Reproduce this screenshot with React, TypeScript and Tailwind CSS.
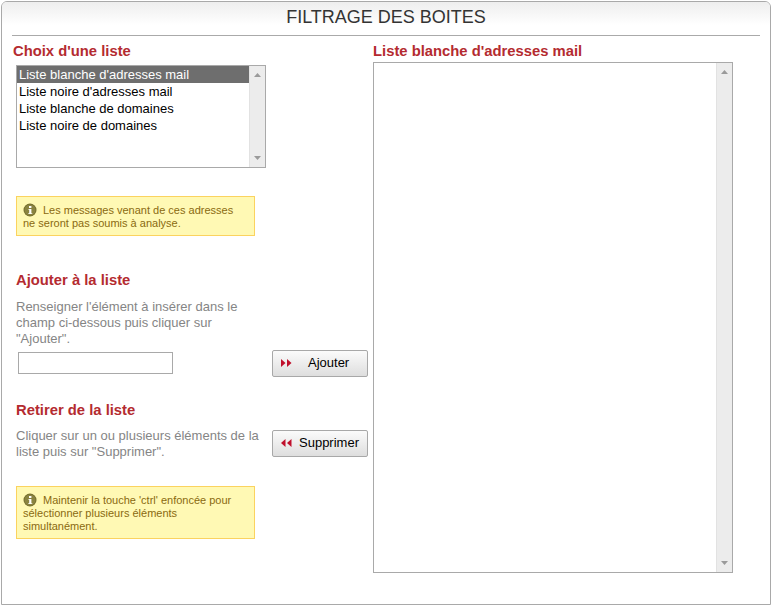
const font = "font-['Liberation_Sans',Arial,sans-serif]";

function InfoIcon() {
  return (
    <svg width="14" height="14" viewBox="0 0 14 14" className="inline-block align-[-3px] mr-[6px]">
      <circle cx="7" cy="7" r="6.5" fill="#77702f" />
      <circle cx="7" cy="7" r="5.5" fill="#8a8440" />
      <rect x="6" y="3" width="2.4" height="2" fill="#fff" />
      <path d="M5.4 6h3v4.2h.9V11H5.2v-.8h1V6.8h-.8z" fill="#fff" />
    </svg>
  );
}

function Arrows({ dir }: { dir: "left" | "right" }) {
  return (
    <svg width="11" height="8" viewBox="0 0 11 8" className="shrink-0 mb-px">
      {dir === "right" ? (
        <path d="M0 0l4.5 4L0 8zM6 0l4.5 4L6 8z" fill="#c0102c" />
      ) : (
        <path d="M4.5 0L0 4l4.5 4zM10.5 0L6 4l4.5 4z" fill="#c0102c" />
      )}
    </svg>
  );
}

function Scrollbar() {
  return (
    <div className="w-4 shrink-0 bg-[#ececec] border-l border-[#e2e2e2] flex flex-col justify-between items-center py-[7px]">
      <svg width="7" height="4" viewBox="0 0 7 4"><path d="M3.5 0L7 4H0z" fill="#9a9a9a" /></svg>
      <svg width="7" height="4" viewBox="0 0 7 4"><path d="M3.5 4L7 0H0z" fill="#9a9a9a" /></svg>
    </div>
  );
}

function Heading({ children, className = "" }: { children: React.ReactNode; className?: string }) {
  return <h2 className={`text-[14.8px] leading-4 font-bold text-[#b42b30] ${className}`}>{children}</h2>;
}

function Alert({ lines, className = "" }: { lines: string[]; className?: string }) {
  return (
    <div className={`w-[239px] bg-[#fff9b4] border border-[#fbd35f] px-[6px] pt-[6px] pb-[5px] text-[11px] leading-[13px] text-[#8a6a10] ${className}`}>
      {lines.map((l, i) => (
        <div key={i} className="whitespace-nowrap">
          {i === 0 && <InfoIcon />}
          {l}
        </div>
      ))}
    </div>
  );
}

function Btn({ dir, label, gap, className = "" }: { dir: "left" | "right"; label: string; gap: string; className?: string }) {
  return (
    <button className={`w-24 h-[27px] shrink-0 flex items-center pl-2 ${gap} text-[13px] text-black border border-[#a8a8a8] rounded-[2px] bg-gradient-to-b from-[#fbfbfb] to-[#dedede] ${className}`}>
      <Arrows dir={dir} />
      <span className="pb-[2px]">{label}</span>
    </button>
  );
}

const items = [
  "Liste blanche d'adresses mail",
  "Liste noire d'adresses mail",
  "Liste blanche de domaines",
  "Liste noire de domaines",
];

export default function App() {
  return (
    <div className={`${font} w-[773px] h-[607px] bg-white pt-px pl-px`}>
      <div className="w-[770px] h-[604px] border border-[#a9a9a9] rounded-t-[6px] flex flex-col overflow-hidden">
        <div className="h-[33px] shrink-0 pt-[5px] bg-gradient-to-b from-[#eeeeee] to-white to-70% text-center text-[18px] leading-[21px] text-[#333]">
          FILTRAGE DES BOITES
        </div>
        <div className="h-px shrink-0 bg-[#aaaaaa] mx-[10px]" />
        <div className="flex pl-[11px] pt-[7px]">
          <div className="w-[355px] shrink-0">
            <Heading>Choix d'une liste</Heading>
            <div className="ml-[3px] mt-[6px] w-[250px] h-[103px] border border-[#a9a9a9] flex">
              <div className="flex-1 text-[13px] text-black">
                {items.map((t, i) => (
                  <div key={t} className={`pl-[2px] h-[17px] leading-[17px] ${i === 0 ? "bg-[#6e6e6e] text-white" : ""}`}>{t}</div>
                ))}
              </div>
              <Scrollbar />
            </div>
            <Alert className="ml-[3px] mt-[28px]" lines={["Les messages venant de ces adresses", "ne seront pas soumis à analyse."]} />
            <div className="ml-[3px] mt-[36px] flex justify-between items-end">
              <div className="w-[250px]">
                <Heading>Ajouter à la liste</Heading>
                <p className="mt-[11px] text-[13px] leading-4 text-[#858585] whitespace-nowrap">
                  Renseigner l'élément à insérer dans le<br />champ ci-dessous puis cliquer sur<br />"Ajouter".
                </p>
                <input className="block ml-[2px] mt-[5px] mb-[3px] w-[155px] h-[22px] border border-[#a9a9a9] bg-white" />
              </div>
              <Btn dir="right" label="Ajouter" gap="gap-[16px]" />
            </div>
            <div className="ml-[3px] mt-[25px] flex justify-between items-start">
              <div className="w-[250px]">
                <Heading>Retirer de la liste</Heading>
                <p className="mt-[10px] text-[13px] leading-4 text-[#858585] whitespace-nowrap">
                  Cliquer sur un ou plusieurs éléments de la<br />liste puis sur "Supprimer".
                </p>
              </div>
              <Btn dir="left" label="Supprimer" gap="gap-[7px]" className="mt-[28px]" />
            </div>
            <Alert className="ml-[3px] mt-[26px]" lines={["Maintenir la touche 'ctrl' enfoncée pour", "sélectionner plusieurs éléments", "simultanément."]} />
          </div>
          <div className="ml-[5px] w-[360px] shrink-0">
            <Heading>Liste blanche d'adresses mail</Heading>
            <div className="mt-[3px] h-[511px] border border-[#a9a9a9] flex">
              <div className="flex-1" />
              <Scrollbar />
            </div>
          </div>
        </div>
      </div>
    </div>
  );
}
